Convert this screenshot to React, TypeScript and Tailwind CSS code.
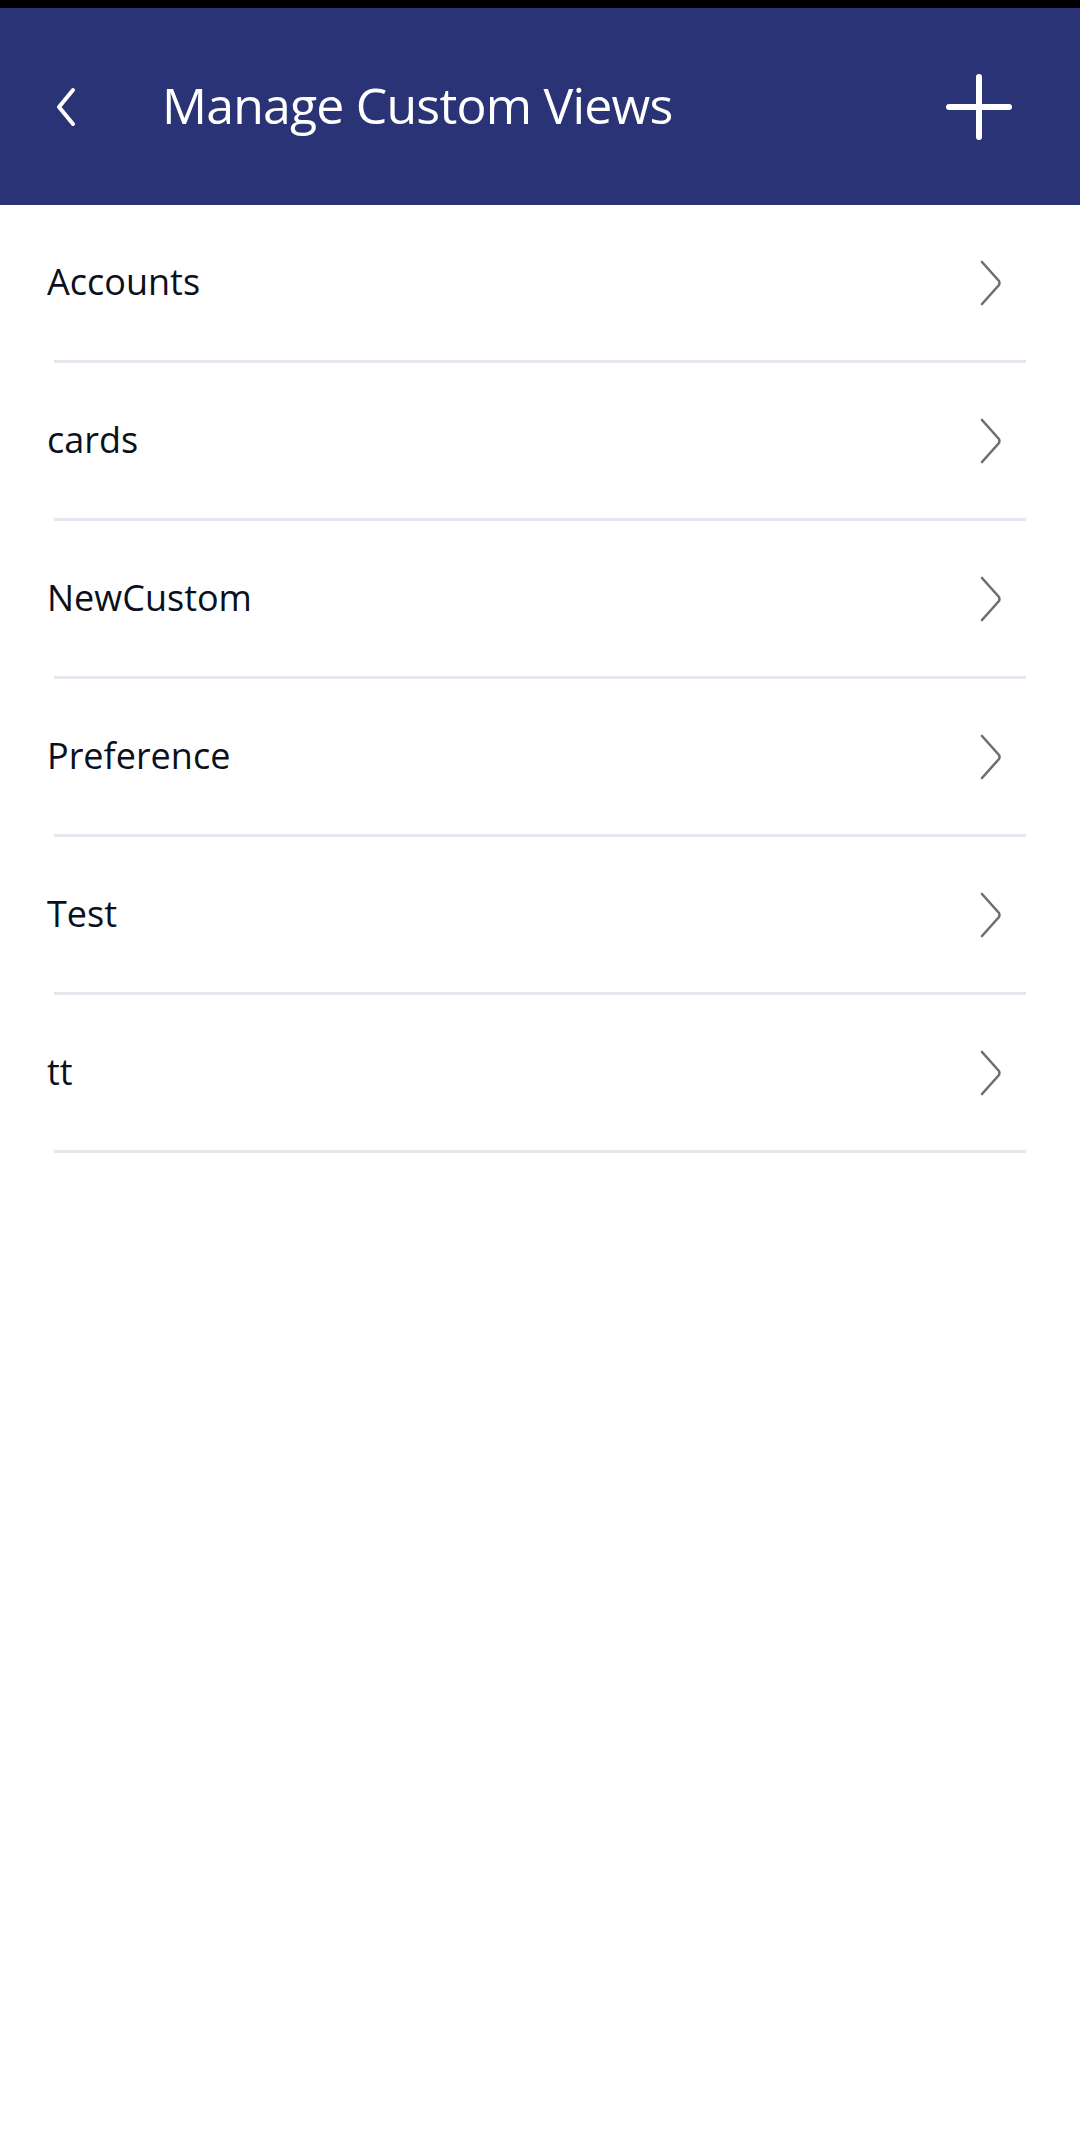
import React from 'react';

const views = ['Accounts', 'cards', 'NewCustom', 'Preference', 'Test', 'tt'];

const BackIcon = () => (
  <svg width="26" height="40" viewBox="0 0 26 40" fill="none">
    <path d="M20 3 L6 20 L20 37" stroke="white" strokeWidth="4" strokeLinecap="round" strokeLinejoin="round" />
  </svg>
);

const PlusIcon = () => (
  <svg width="66" height="66" viewBox="0 0 66 66" fill="none">
    <path d="M33 3 V63 M3 33 H63" stroke="white" strokeWidth="6" strokeLinecap="round" />
  </svg>
);

const ChevronRight = () => (
  <svg width="24" height="46" viewBox="0 0 24 46" fill="none">
    <path d="M3 2 L20 21 Q21 23 20 25 L3 44" stroke="#6f6f6f" strokeWidth="2.6" strokeLinecap="round" strokeLinejoin="round" />
  </svg>
);

const App: React.FC = () => {
  return (
    <div className="min-h-[2156px] w-[1080px] bg-white" style={{ fontFamily: '"Open Sans", "Noto Sans", sans-serif' }}>
      <div className="h-[8px] bg-black" />
      <header className="h-[197px] bg-[#2a3375] flex items-center">
        <div className="w-[162px] flex items-center pl-[53px]">
          <BackIcon />
        </div>
        <h1 className="flex-1 text-white text-[50px] leading-none tracking-[-0.8px] pb-[4px]">Manage Custom Views</h1>
        <div className="pr-[68px] flex items-center">
          <PlusIcon />
        </div>
      </header>
      <ul>
        {views.map((name) => (
          <li key={name}>
            <div className="h-[155px] flex items-center justify-between pl-[47px] pr-[77px]">
              <span className="text-[36px] text-[#0b111c] leading-none pb-[2px]">{name}</span>
              <ChevronRight />
            </div>
            <div className="h-[3px] bg-[#e4e8ee] ml-[54px] mr-[54px]" />
          </li>
        ))}
      </ul>
    </div>
  );
};

export default App;
